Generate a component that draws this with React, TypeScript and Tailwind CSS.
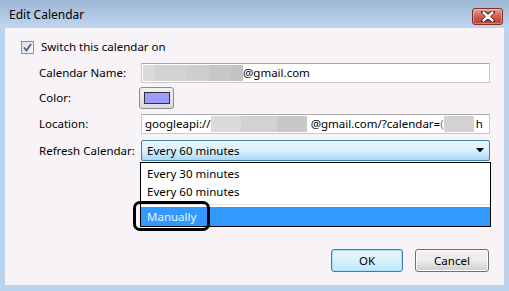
import React from 'react';

const font = { fontFamily: '"Noto Sans", "Open Sans", sans-serif' };

function CloseButton() {
    return (
        <div className="w-[31px] h-[17px] rounded-[3px] border border-[#7a3030] bg-gradient-to-b from-[#e4a196] via-[#cc5f4e] to-[#b7432f] flex items-center justify-center shadow-[inset_0_0_0_1px_rgba(255,255,255,0.35)]">
            <svg width="14" height="11" viewBox="0 0 14 11">
                <path d="M2 1 L7 4.5 L12 1 M2 10 L7 6.5 L12 10" stroke="#4a2020" strokeWidth="4" fill="none" strokeLinecap="round" />
                <path d="M2.5 1.5 L7 5.5 L11.5 1.5 M2.5 9.5 L7 5.5 L11.5 9.5" stroke="#ffffff" strokeWidth="2.4" fill="none" strokeLinecap="round" />
            </svg>
        </div>
    );
}

function Checkbox() {
    return (
        <div className="w-[13px] h-[13px] border border-[#8f8f8f] bg-gradient-to-br from-[#dcdcdc] to-[#fafafa] flex items-center justify-center">
            <svg width="9" height="9" viewBox="0 0 9 9">
                <path d="M1 4.5 L3.5 7.5 L8 1" stroke="#4a5f97" strokeWidth="1.8" fill="none" />
            </svg>
        </div>
    );
}

function Blur({ w, c }: { w: number; c: string }) {
    return <span className="inline-block h-[16px] shrink-0" style={{ width: w, background: c }} />;
}

function Row({ label, children, h, mt }: { label: string; children: React.ReactNode; h: string; mt: string }) {
    return (
        <div className={`flex items-center ${h} ${mt}`}>
            <div className="w-[120px] pl-[18px] text-black shrink-0 whitespace-nowrap">{label}</div>
            {children}
        </div>
    );
}

export default function App() {
    return (
        <div className="w-[509px] h-[291px] bg-[#bcd3ef] flex flex-col text-[11.5px] text-black" style={font}>
            <div className="h-[28px] shrink-0 bg-gradient-to-b from-[#9db7d5] to-[#c1d6ef] flex items-start justify-between pl-[9px] pr-[6px]">
                <div className="mt-[7px] text-[12px] leading-[16px]">Edit Calendar</div>
                <div className="mt-[8px]">
                    <CloseButton />
                </div>
            </div>
            <div className="relative flex-1 mx-[5px] mb-[6px] bg-[#f7f3f7] flex flex-col pl-[16px] pr-[14px]">
                <div className="flex items-center gap-[7px] mt-[12px] h-[14px]">
                    <Checkbox />
                    <span className="leading-[14px]">Switch this calendar on</span>
                </div>

                <Row label="Calendar Name:" h="h-[20px]" mt="mt-[9px]">
                    <div className="flex-1 h-[20px] bg-white border border-[#c9c9c9] border-t-[#a9a9a9] flex items-center pl-[1px] overflow-hidden whitespace-nowrap">
                        <Blur w={12} c="#dcdbdb" />
                        <Blur w={32} c="#d4d2d2" />
                        <Blur w={22} c="#cfcdcd" />
                        <Blur w={22} c="#c8c6c6" />
                        <Blur w={12} c="#c3c1c1" />
                        <span>@gmail.com</span>
                    </div>
                </Row>

                <Row label="Color:" h="h-[22px]" mt="mt-[4px]">
                    <div className="w-[35px] h-[22px] -ml-[2px] rounded-[3px] border border-[#8d8d8d] bg-gradient-to-b from-[#f2f2f2] to-[#dadada] flex items-center justify-center">
                        <div className="w-[26px] h-[12px] border border-[#333] bg-[#9c9cff]" />
                    </div>
                </Row>

                <Row label="Location:" h="h-[20px]" mt="mt-[5px]">
                    <div className="flex-1 h-[20px] bg-white border border-[#c9c9c9] border-t-[#a9a9a9] flex items-center pl-[3px] overflow-hidden whitespace-nowrap">
                        <span>googleapi://</span>
                        <Blur w={30} c="#dcdbdb" />
                        <Blur w={36} c="#d3d1d1" />
                        <Blur w={30} c="#c9c7c7" />
                        <span className="w-[4px] shrink-0" />
                        <span>@gmail.com/?calendar=</span>
                        <span className="text-[#777]">(</span>
                        <Blur w={30} c="#d3d1d1" />
                        <span className="ml-[2px]">h</span>
                    </div>
                </Row>

                <Row label="Refresh Calendar:" h="h-[21px]" mt="mt-[6px]">
                    <div className="flex-1 h-[21px] rounded-[2px] border border-[#3c7fb1] bg-gradient-to-b from-[#eaf6fd] via-[#d9f0fc] to-[#a7d9f5] flex items-center justify-between pl-[5px] pr-[5px]">
                        <span>Every 60 minutes</span>
                        <svg width="8" height="5" viewBox="0 0 8 5">
                            <path d="M0 0 H8 L4 4.5 Z" fill="#000" />
                        </svg>
                    </div>
                </Row>

                <div className="flex-1" />

                <div className="flex justify-end gap-[12px] mb-[13px] pr-[1px]">
                    <button className="w-[72px] h-[23px] rounded-[3px] border border-[#3c7fb1] bg-gradient-to-b from-[#eaf6fd] via-[#d9f0fc] to-[#bee6fd] shadow-[inset_0_0_0_1px_#a8dff9]">
                        OK
                    </button>
                    <button className="w-[74px] h-[23px] rounded-[3px] border border-[#707070] bg-gradient-to-b from-[#f2f2f2] via-[#ebebeb] to-[#cfcfcf] shadow-[inset_0_0_0_1px_#fcfcfc]">
                        Cancel
                    </button>
                </div>

                <div className="absolute left-[135px] top-[134px] w-[351px] h-[65px] bg-white border border-black flex flex-col">
                    <div className="h-[18px] pl-[6px] flex items-center mt-[2px]">Every 30 minutes</div>
                    <div className="h-[18px] pl-[6px] flex items-center">Every 60 minutes</div>
                    <div className="h-[1px] bg-[#e3e3e3] mt-[3px]" />
                    <div className="flex-1 bg-[#3399ff] text-[#e8f2ff] pl-[6px] flex items-center mt-[2px]">Manually</div>
                </div>

                <div className="absolute left-[128px] top-[173px] w-[77px] h-[30px] border-[3px] border-black rounded-[7px]" />
            </div>
        </div>
    );
}
